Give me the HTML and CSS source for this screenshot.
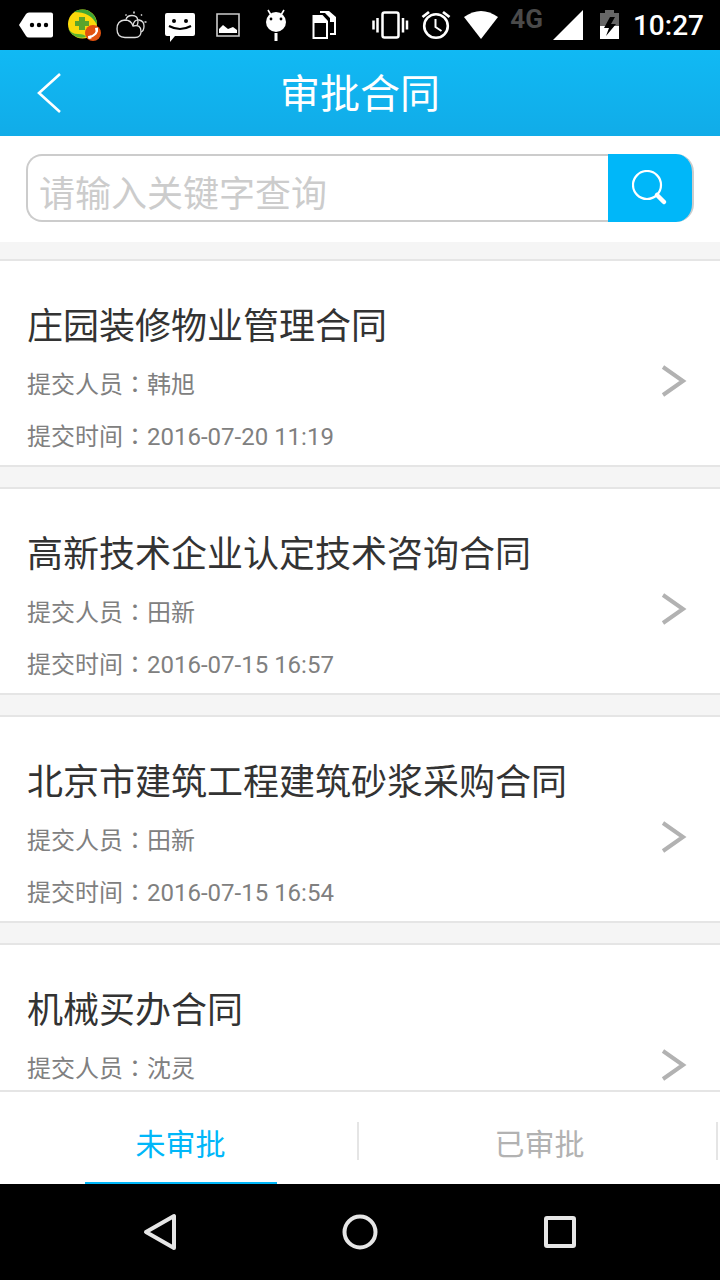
FILE: index.html
```html
<!DOCTYPE html>
<html lang="zh-CN">
<head>
  <meta charset="UTF-8">
  <meta name="viewport" content="width=device-width, initial-scale=1.0">
  <title>审批合同</title>
  <link rel="stylesheet" href="styles.css">
</head>
<body>
  <!-- Status bar -->
  <div class="status-bar">
    <div class="status-left">
      <svg width="48" height="50" viewBox="0 0 48 50">
        <path d="M7 25l7-11q1-1.500 3-1.500h22q2 0 2 2v21q0 2-2 2h-22q-2 0-3-1.500z" fill="#fff"/>
        <circle cx="20" cy="25" r="2.200"/><circle cx="27" cy="25" r="2.200"/><circle cx="34" cy="25" r="2.200"/>
      </svg>
      <svg width="48" height="50" viewBox="0 0 48 50">
        <circle cx="22.500" cy="24" r="14.500" fill="#fbd90b"/>
        <path d="M14 12A14.500 14.500 0 0 1 35 17q2 3 2 8Q31 12 14 12z" fill="#3fa535"/>
        <path d="M8 28q3 6 10 6t8 3A14.500 14.500 0 0 1 8 28z" fill="#5bb531"/>
        <path d="M19 17h6v4h4v5h-4v4h-6v-4h-4v-5h4z" fill="#5ba42c"/>
        <circle cx="33" cy="33" r="8" fill="#e2520f"/>
        <path d="M36.500 28.500q2 6-8 9" fill="none" stroke="#fff" stroke-width="2"/>
        <path d="M35 28l3-.5v4l-2 .5zM28 36l3-.5.5 3-3 .5z" fill="#fff"/>
      </svg>
      <svg width="48" height="50" viewBox="0 0 48 50" fill="none" stroke="#ddd" stroke-width="1.300">
        <path d="M17 37.500q-8 0-8-8.500t8-9q6 0 8 6 8-2 8 5.500 0 6-6 6z"/>
        <path d="M18 19.500q1-4 6-4 6 0 6 6 0 2-1 4"/>
        <path d="M25 25.500q1-6 6-5.500 5 1 5 6 0 5-3 6"/>
        <path d="M17.500 14.500l1 1M26 11.500v2M34 14.500l-1 1M36.500 22h2" stroke-width="1.600"/>
      </svg>
      <svg width="48" height="50" viewBox="0 0 48 50">
        <path d="M11 13h26q2 0 2 2v19q0 2-2 2H19l-5 6v-6h-3q-2 0-2-2V15q0-2 2-2z" fill="#fff"/>
        <circle cx="18" cy="21" r="2"/><circle cx="30" cy="21" r="2"/>
        <path d="M13 26q11 6 22 0" fill="none" stroke="#000" stroke-width="2"/>
      </svg>
      <svg width="48" height="50" viewBox="0 0 48 50">
        <path d="M13 14h22v22H13z" fill="none" stroke="#ccc" stroke-width="1.600"/>
        <path d="M15 33v-4l4-4 5 4 5-2 4 3v3z" fill="#fff"/>
      </svg>
      <svg width="48" height="50" viewBox="0 0 48 50">
        <circle cx="24" cy="22" r="10" fill="#fff"/>
        <path d="M16 10l3 5M32 10l-3 5" stroke="#fff" stroke-width="1.600"/>
        <path d="M24 33v8" stroke="#fff" stroke-width="3"/>
        <circle cx="19" cy="19" r="1.400"/><circle cx="29" cy="19" r="1.400"/>
      </svg>
      <svg width="48" height="50" viewBox="0 0 48 50">
        <path d="M20 11h9l7 6v18h-6v-2h4V22h-4v-4l-5-5h-5z" fill="#fff"/>
        <path d="M12.500 15h10l5.500 6v18H12.500z" fill="#fff"/>
        <path d="M14.500 23H26v14H14.500z"/>
      </svg>
    </div>
    <div class="status-right">
      <svg width="38" height="50" viewBox="0 0 38 50" fill="none" stroke="#fff" stroke-width="2.500">
        <rect x="11.500" y="12.500" width="16" height="25" rx="2"/>
        <path d="M6.500 18v14.500M32 18v14.500"/><path d="M2.500 20.500v9M36 20.500v9"/>
      </svg>
      <svg width="34" height="50" viewBox="0 0 34 50" fill="none" stroke="#fff">
        <circle cx="17" cy="26" r="11.800" stroke-width="2.600"/>
        <path d="M16.500 19v8l6 4" stroke-width="2"/>
        <path d="M3.500 17l6.500-5M30.500 17L24 12" stroke-width="2.800"/>
      </svg>
      <svg width="36" height="50" viewBox="0 0 36 50">
        <path d="M1 17q17-12 34 0L18 39z" fill="#fff"/>
      </svg>
      <span class="network">4G</span>
      <svg width="36" height="50" viewBox="0 0 36 50">
        <path d="M0 40L30 10v30z" fill="#fff"/>
      </svg>
      <svg width="24" height="50" viewBox="0 0 24 50">
        <path d="M1 13h5v-3h9v3h5v13H1z" fill="#666"/>
        <path d="M1 26h19v13H1z" fill="#fff"/>
        <path d="M11 17l-6 11h5l-3 8 10-12h-5l4-7z"/>
      </svg>
      <span class="clock">10:27</span>
    </div>
  </div>

  <header class="header">
    <button class="back-btn" type="button" aria-label="返回">
      <svg width="24" height="42" viewBox="0 0 24 42"><path d="M23 2L2 21l21 19" fill="none" stroke="#fff" stroke-width="2.600"/></svg>
    </button>
    <h1>审批合同</h1>
  </header>

  <form class="search">
    <input type="text" id="keyword" aria-label="关键字" placeholder="请输入关键字查询">
    <button class="search-btn" type="button" aria-label="查询">
      <svg width="36" height="36" viewBox="0 0 36 36" fill="none" stroke="#fff">
        <circle cx="15" cy="15" r="14" stroke-width="2.200"/>
        <path d="M25 25l7 7" stroke-width="4.500" stroke-linecap="round"/>
      </svg>
    </button>
  </form>

  <!-- Contract list -->
  <main class="list">
    <a class="card" href="#">
      <div class="card-body">
        <h2>庄园装修物业管理合同</h2>
        <p>提交人员<span class="colon" lang="zh-TW">：</span>韩旭</p>
        <p>提交时间<span class="colon" lang="zh-TW">：</span>2016-07-20 11:19</p>
      </div>
      <svg class="arrow" width="26" height="32" viewBox="0 0 26 32"><path d="M2 2l20 14L2 30"/></svg>
    </a>
    <a class="card" href="#">
      <div class="card-body">
        <h2>高新技术企业认定技术咨询合同</h2>
        <p>提交人员<span class="colon" lang="zh-TW">：</span>田新</p>
        <p>提交时间<span class="colon" lang="zh-TW">：</span>2016-07-15 16:57</p>
      </div>
      <svg class="arrow" width="26" height="32" viewBox="0 0 26 32"><path d="M2 2l20 14L2 30"/></svg>
    </a>
    <a class="card" href="#">
      <div class="card-body">
        <h2>北京市建筑工程建筑砂浆采购合同</h2>
        <p>提交人员<span class="colon" lang="zh-TW">：</span>田新</p>
        <p>提交时间<span class="colon" lang="zh-TW">：</span>2016-07-15 16:54</p>
      </div>
      <svg class="arrow" width="26" height="32" viewBox="0 0 26 32"><path d="M2 2l20 14L2 30"/></svg>
    </a>
    <a class="card" href="#">
      <div class="card-body">
        <h2>机械买办合同</h2>
        <p>提交人员<span class="colon" lang="zh-TW">：</span>沈灵</p>
      </div>
      <svg class="arrow" width="26" height="32" viewBox="0 0 26 32"><path d="M2 2l20 14L2 30"/></svg>
    </a>
  </main>

  <!-- Tabs -->
  <div class="tabs">
    <button class="tab active" type="button"><span>未审批</span></button>
    <button class="tab" type="button"><span>已审批</span></button>
  </div>

  <!-- System navigation -->
  <nav class="nav-bar">
    <button type="button" aria-label="后退">
      <svg width="40" height="40" viewBox="0 0 40 40"><path d="M34 4v32L6 20z"/></svg>
    </button>
    <button type="button" aria-label="主页">
      <svg width="40" height="40" viewBox="0 0 40 40"><circle cx="20" cy="20" r="15.500"/></svg>
    </button>
    <button type="button" aria-label="最近任务">
      <svg width="40" height="40" viewBox="0 0 40 40"><rect x="6" y="6" width="28" height="28" rx="1"/></svg>
    </button>
  </nav>
</body>
</html>
```
FILE: styles.css
```css
* {
  margin: 0;
  padding: 0;
  box-sizing: border-box;
}
body {
  display: flex;
  flex-direction: column;
  height: 100vh;
  font-family: Roboto, "Noto Sans CJK SC", sans-serif;
  color: #333;
  background-color: #fff;
}
svg {
  display: block;
  flex-shrink: 0;
}
button {
  border: none;
  background: none;
  font-family: inherit;
  cursor: pointer;
}
.status-bar {
  display: flex;
  justify-content: space-between;
  flex-shrink: 0;
  padding: 0 16px 0 12px;
  height: 50px;
  background-color: #000;
  color: #fff;
}
.status-left {
  display: flex;
}
.status-right {
  display: flex;
  gap: 10px;
}
.network {
  width: 34px;
  font-size: 26px;
  font-weight: bold;
  line-height: 38px;
  text-align: right;
  color: #4a4a4a;
}
.clock {
  font-size: 28px;
  font-weight: 500;
  line-height: 52px;
}
.header {
  display: grid;
  grid-template-columns: 100px 1fr 100px;
  align-items: center;
  flex-shrink: 0;
  height: 86px;
  background: linear-gradient(#11b9f4, #11ace8);
  color: #fff;
}
.back-btn {
  padding-left: 37px;
}
.header h1 {
  padding-top: 4px;
  font-size: 40px;
  font-weight: normal;
  line-height: 60px;
  text-align: center;
}
.search {
  display: flex;
  flex-shrink: 0;
  padding: 18px 26px 20px;
}
.search input {
  flex: 1;
  min-width: 0;
  height: 68px;
  padding: 14px 12px 0 11px;
  border: 2px solid #ccc;
  border-right: none;
  border-radius: 16px 0 0 16px;
  font-family: inherit;
  font-size: 36px;
  color: #333;
  outline: none;
}
.search input::placeholder {
  color: #ccc;
}
.search-btn {
  display: flex;
  align-items: center;
  justify-content: center;
  width: 86px;
  border-right: 2px solid #ccc;
  border-radius: 0 18px 18px 0;
  background-color: #00b7f9;
}
.list {
  display: flex;
  flex-direction: column;
  gap: 20px;
  flex: 1;
  min-height: 0;
  padding-top: 17px;
  overflow-y: auto;
  scrollbar-width: none;
  background-color: #f5f5f5;
}
.card {
  display: flex;
  justify-content: space-between;
  align-items: flex-start;
  flex-shrink: 0;
  padding: 42px 33px 2px 27px;
  border-top: 2px solid #e5e5e5;
  border-bottom: 2px solid #e5e5e5;
  background-color: #fff;
  color: #333;
  text-decoration: none;
}
.card h2 {
  margin-bottom: 8px;
  font-size: 36px;
  font-weight: normal;
  line-height: 48px;
}
.card p {
  font-size: 24px;
  line-height: 52px;
  color: #808080;
}
/* vertically centred full-width colon */
.card .colon {
  font-family: "Noto Sans CJK TC", sans-serif;
  line-height: 24px;
}
.arrow {
  margin-top: 62px;
  fill: none;
  stroke: #b2b2b2;
  stroke-width: 4;
}
.tabs {
  display: flex;
  flex-shrink: 0;
  height: 94px;
  padding-right: 2px;
  border-top: 2px solid #e5e5e5;
  background-color: #fff;
}
.tab {
  display: flex;
  justify-content: center;
  flex: 1;
  padding-left: 2px;
  font-size: 30px;
  color: #b2b2b2;
  /* short divider on the right side */
  background: linear-gradient(#e5e5e5, #e5e5e5) no-repeat right 30px / 2px 38px;
}
.tab span {
  width: 192px;
  height: 92px;
  padding-top: 16px;
  line-height: 74px;
  border-bottom: 2px solid transparent;
}
.tab.active span {
  color: #00b7f9;
  border-bottom-color: #00b7f9;
}
.nav-bar {
  display: flex;
  justify-content: center;
  gap: 160px;
  flex-shrink: 0;
  height: 96px;
  background-color: #000;
}
.nav-bar svg {
  fill: none;
  stroke: #e6e6e6;
  stroke-width: 4;
  stroke-linejoin: round;
}
```
